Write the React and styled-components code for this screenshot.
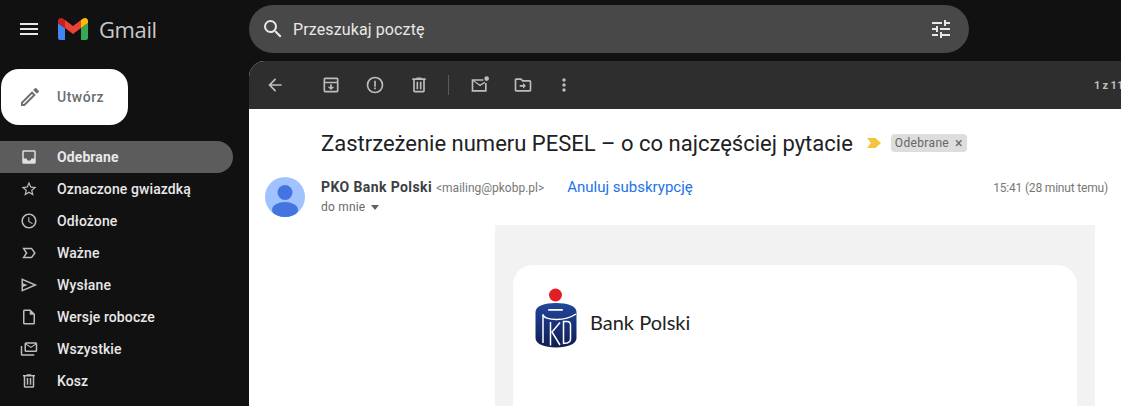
import styled, { createGlobalStyle } from 'styled-components';

const GlobalStyle = createGlobalStyle`
  html, body { margin: 0; height: 100%; overflow: hidden; background: #111111; }
  body { font-family: Roboto, "Liberation Sans", sans-serif; }
  #root { height: 100%; }
`

const Page = styled.div`
  display: grid;
  grid-template-columns: 249px 872px;
  height: 406px;
  overflow: hidden;
  background: #111111;
`
const Sidebar = styled.aside`
  display: flex;
  flex-direction: column;
`
const Brand = styled.div`
  display: flex;
  align-items: center;
  height: 58px;
  padding-left: 17px;
  color: #e8e8e8;
  svg { display: block; }
`
const BrandLogo = styled.svg`
  margin-left: 17px;
`
const BrandName = styled.span`
  margin-left: 11px;
  font-family: "Open Sans", sans-serif;
  font-size: 22px;
  color: #c9c9c9;
  letter-spacing: -0.4px;
`
const Compose = styled.button`
  display: flex;
  align-items: center;
  width: 127px;
  height: 56px;
  margin: 11px 0 16px 1px;
  padding: 0 0 0 17px;
  border: 0;
  border-radius: 18px;
  background: #ffffff;
  color: #6a6e72;
  font: 500 14px Roboto, sans-serif;
  letter-spacing: 0.5px;
  span { margin-left: 15px; }
`
const Nav = styled.nav`
  display: flex;
  flex-direction: column;
`
const NavItem = styled.div`
  display: flex;
  align-items: center;
  width: 233px;
  height: 32px;
  padding-left: 20px;
  box-sizing: border-box;
  border-radius: 0 16px 16px 0;
  background: ${p => (p.$active ? '#5c5c5c' : 'transparent')};
  color: #e8e8e8;
  font-size: 14px;
  font-weight: ${p => (p.$active ? 700 : 500)};
  letter-spacing: 0.1px;
  svg { color: ${p => (p.$active ? '#e0e0e0' : '#bdbdbd')}; flex: none; }
  span { margin-left: 19px; }
`
const Main = styled.main`
  display: flex;
  flex-direction: column;
  min-width: 0;
`
const SearchBar = styled.div`
  display: flex;
  align-items: center;
  width: 720px;
  height: 48px;
  margin: 5px 0 8px;
  padding: 0 16px 0 12px;
  box-sizing: border-box;
  border-radius: 24px;
  background: #484848;
  color: #e8e8e8;
  font-size: 16px;
  letter-spacing: 0.12px;
  span { margin-left: 8px; flex: 1; }
`
const Panel = styled.section`
  display: flex;
  flex-direction: column;
  flex: 1;
  background: #ffffff;
  border-radius: 16px 0 0 0;
  overflow: hidden;
`
const Toolbar = styled.div`
  display: flex;
  align-items: center;
  height: 48px;
  padding-left: 16px;
  background: #2e2e2e;
  color: #bdbdbd;
  white-space: nowrap;
  flex: none;
`
const ToolButton = styled.div`
  display: flex;
  margin-left: ${p => p.$gap}px;
  flex: none;
`
const Divider = styled.div`
  width: 1px;
  height: 20px;
  margin-left: 19px;
  background: #5a5a5a;
  flex: none;
`
const Pager = styled.span`
  margin-left: 520px;
  font-size: 11px;
  font-weight: 700;
  letter-spacing: 0.5px;
  word-spacing: -1.5px;
  color: #bdbdbd;
`
const SubjectRow = styled.div`
  display: flex;
  align-items: center;
  height: 28px;
  margin: 20px 0 0 72px;
`
const Subject = styled.h2`
  margin: 0;
  font-weight: 400;
  font-size: 22px;
  color: #202124;
  white-space: nowrap;
`
const Chevron = styled.svg`
  margin-left: 14px;
  flex: none;
`
const Chip = styled.span`
  display: flex;
  align-items: center;
  height: 18px;
  margin-left: 10px;
  padding: 0 4px;
  border-radius: 4px;
  background: #dddddd;
  color: #666666;
  font-size: 12px;
  letter-spacing: 0.35px;
  b { font-weight: 400; font-size: 14px; margin-left: 6px; }
`
const Sender = styled.div`
  display: flex;
  margin: 20px 13px 0 16px;
`
const Avatar = styled.div`
  flex: none;
  width: 40px;
  height: 40px;
  margin-right: 16px;
  border-radius: 50%;
  overflow: hidden;
  background: #a0c3ff;
`
const SenderInfo = styled.div`
  flex: 1;
`
const SenderLine = styled.div`
  display: flex;
  align-items: baseline;
  height: 20px;
  padding-top: 1px;
  font-size: 12px;
  color: #5f6368;
`
const SenderName = styled.span`
  font-size: 14px;
  font-weight: 700;
  letter-spacing: 0.4px;
  color: #3c4043;
`
const SenderMail = styled.span`
  margin-left: 4px;
  font-size: 12px;
  color: #777777;
`
const Unsubscribe = styled.a`
  margin-left: 23px;
  font-size: 15px;
  color: #1a73e8;
`
const Time = styled.span`
  margin-left: auto;
  font-size: 12px;
  letter-spacing: -0.18px;
  color: #777777;
`
const ToMe = styled.div`
  display: flex;
  align-items: center;
  height: 20px;
  margin-top: -1px;
  font-size: 12px;
  letter-spacing: 0.2px;
  color: #666a6e;
  i {
    margin-left: 6px;
    border: 4.5px solid transparent;
    border-top: 5px solid #5f6368;
    border-bottom: 0;
  }
`
const MailBody = styled.div`
  flex: 1;
  width: 564px;
  margin: 8px 0 0 246px;
  padding: 40px 18px 0;
  background: #f2f2f2;
`
const MailCard = styled.div`
  height: 200px;
  padding: 23px 0 0 22px;
  border-radius: 20px 20px 0 0;
  background: #ffffff;
`
const BankLogo = styled.div`
  display: flex;
  align-items: center;
  gap: 13px;
`
const BankName = styled.span`
  margin-top: 6px;
  font-family: Lato, sans-serif;
  font-size: 20px;
  color: #222222;
`

const Icon = ({ d, size = 20 }) => (
  <svg width={size} height={size} viewBox="0 0 24 24" fill="currentColor" fillRule="evenodd">
    <path d={d} />
  </svg>
)

const icons = {
  menu: 'M3 18h18v-2H3v2zm0-5h18v-2H3v2zm0-7v2h18V6H3z',
  search: 'M15.5 14h-.79l-.28-.27A6.471 6.471 0 0 0 16 9.5 6.5 6.5 0 1 0 9.5 16c1.61 0 3.09-.59 4.23-1.57l.27.28v.79l5 4.99L20.49 19l-4.99-5zm-6 0C7.01 14 5 11.99 5 9.5S7.01 5 9.5 5 14 7.01 14 9.5 11.99 14 9.5 14z',
  tune: 'M3 17v2h6v-2H3zM3 5v2h10V5H3zm10 16v-2h8v-2h-8v-2h-2v6h2zM7 9v2H3v2h4v2h2V9H7zm14 4v-2H11v2h10zm-6-4h2V7h4V5h-4V3h-2v6z',
  back: 'M20 11H7.83l5.59-5.59L12 4l-8 8 8 8 1.41-1.41L7.83 13H20v-2z',
  pencil: 'M3 17.25V21h3.75L17.81 9.94l-3.75-3.75L3 17.25zM5.92 19H5v-.92l9.06-9.06.92.92L5.92 19zM20.71 5.63l-2.34-2.34a1 1 0 0 0-1.41 0l-1.83 1.83 3.75 3.75 1.83-1.83a1 1 0 0 0 0-1.41z',
  inbox: 'M19 3H5c-1.1 0-2 .9-2 2v14c0 1.1.9 2 2 2h14c1.1 0 2-.9 2-2V5c0-1.1-.9-2-2-2zm0 11h-4c0 1.66-1.35 3-3 3s-3-1.34-3-3H5V5h14z',
  star: 'M22 9.24l-7.19-.62L12 2 9.19 8.63 2 9.24l5.46 4.73L5.82 21 12 17.27 18.18 21l-1.63-7.03L22 9.24zM12 15.4l-3.76 2.27 1-4.28-3.32-2.88 4.38-.38L12 6.1l1.71 4.04 4.38.38-3.32 2.88 1 4.28L12 15.4z',
  clock: 'M11.99 2C6.47 2 2 6.48 2 12s4.47 10 9.99 10C17.52 22 22 17.52 22 12S17.52 2 11.99 2zM12 20c-4.42 0-8-3.58-8-8s3.58-8 8-8 8 3.58 8 8-3.58 8-8 8zm.5-13H11v6l5.25 3.15.75-1.23-4.5-2.67z',
  important: 'M15 19H3l4.5-7L3 5h12c.65 0 1.26.31 1.63.84L21 12l-4.37 6.16c-.37.52-.98.84-1.63.84zm-8.500-2H15l3.5-5L15 7H6.500l3.5 5-3.5 5z',
  send: 'M2 3l21 9-21 9zM4 6.100V9.500l6 2.500-6 2.500v3.400L18 12z',
  draft: 'M14 2H6c-1.100 0-1.990.9-1.990 2L4 20c0 1.100.89 2 1.990 2H18c1.100 0 2-.9 2-2V8l-6-6zM6 20V4h7v5h5v11H6z',
  allMail: 'M8 3h13a2 2 0 0 1 2 2v9a2 2 0 0 1-2 2H8a2 2 0 0 1-2-2V5a2 2 0 0 1 2-2zm.4 2l6.100 4 6.100-4zM8 6.200V14h13V6.200l-6.500 4.300zM1 8h2v11h16v2H3a2 2 0 0 1-2-2z',
  trash: 'M15 4V3H9v1H4v2h1v13c0 1.100.9 2 2 2h10c1.100 0 2-.9 2-2V6h1V4h-5zm2 15H7V6h10v13zM9 8h2v9H9zm4 0h2v9h-2z',
  archive: 'M19 3H5a2 2 0 0 0-2 2v14a2 2 0 0 0 2 2h14a2 2 0 0 0 2-2V5a2 2 0 0 0-2-2zM5 5h14v3H5V5zm0 14V10h14v9H5zM13 11h-2v3H8l4 4 4-4h-3z',
  report: 'M12 2a10 10 0 1 0 0 20 10 10 0 0 0 0-20zm0 18a8 8 0 1 1 0-16 8 8 0 0 1 0 16zm-1-13h2v7h-2zm0 8h2v2h-2z',
  unread: 'M20 1.500a2.800 2.800 0 1 1 0 5.600 2.800 2.800 0 0 1 0-5.600zM2 5h14v2H5l7 4.500 6-3.800V9.500h2V20H2zm2 2.500V18h14v-8.300l-6 3.900z',
  move: 'M20 6h-8l-2-2H4c-1.100 0-2 .9-2 2v12c0 1.100.9 2 2 2h16c1.100 0 2-.9 2-2V8c0-1.100-.9-2-2-2zm0 12H4V6h5.170l2 2H20v10zm-8-4H8v-2h4V9.500l3.500 3.500-3.500 3.500V14z',
  more: 'M12 8c1.100 0 2-.9 2-2s-.9-2-2-2-2 .9-2 2 .9 2 2 2zm0 2c-1.100 0-2 .9-2 2s.9 2 2 2 2-.9 2-2-.9-2-2-2zm0 6c-1.100 0-2 .9-2 2s.9 2 2 2 2-.9 2-2-.9-2-2-2z',
}

const navItems = [
  { label: 'Odebrane', icon: 'inbox', active: true },
  { label: 'Oznaczone gwiazdką', icon: 'star' },
  { label: 'Odłożone', icon: 'clock' },
  { label: 'Ważne', icon: 'important' },
  { label: 'Wysłane', icon: 'send' },
  { label: 'Wersje robocze', icon: 'draft' },
  { label: 'Wszystkie', icon: 'allMail' },
  { label: 'Kosz', icon: 'trash' },
]

const tools = [
  { icon: 'archive', gap: 36 },
  { icon: 'report', gap: 24 },
  { icon: 'trash', gap: 24 },
]
const tools2 = [
  { icon: 'unread', gap: 21 },
  { icon: 'move', gap: 23 },
  { icon: 'more', gap: 21 },
]

function GmailLogo() {
  return (
    <BrandLogo width="30" height="22" viewBox="0 0 30 22">
      <path fill="#4285f4" d="M2 22h5V10L0 5v15c0 1.100.9 2 2 2" />
      <path fill="#34a853" d="M23 22h5c1.100 0 2-.9 2-2V5l-7 5" />
      <path fill="#fbbc04" d="M23 2v8l7-5V3c0-2.500-2.800-3.900-4.800-2.400" />
      <path fill="#ea4335" d="M7 10V2l8 6 8-6v8l-8 6" />
      <path fill="#c5221f" d="M0 3v2l7 5V2L4.800.6C2.800-.9 0 .5 0 3" />
    </BrandLogo>
  )
}

function PkoMark() {
  return (
    <svg width="42" height="62" viewBox="0 0 42 62">
      <defs>
        <linearGradient id="pko" x1="0" y1="0" x2="0" y2="1">
          <stop offset="0" stopColor="#22479b" />
          <stop offset="1" stopColor="#0f1d52" />
        </linearGradient>
      </defs>
      <circle cx="20.500" cy="7" r="6.500" fill="#e31e24" />
      <path fill="url(#pko)" d="M0.500 24c0-6 9-9 20.500-9s20.500 3 20.500 9v26c0 6-9 9.500-20.500 9.500S0.500 56 0.500 50z" />
      <rect x="13" y="21" width="15" height="1.800" rx="0.900" fill="#ffffff" />
      <g fill="none" stroke="#ffffff" strokeWidth="1.500">
        <path d="M8 26.500c0 3 6 5 13.500 5s13.500-1.500 19.500-5.500" />
        <path d="M8 26.500V55" />
        <path d="M15.500 34v23.500" />
        <path d="M25 34.500l-8 9.500 8 13" />
        <path d="M28.500 33.500h3.500c2 0 3.500 1.500 3.500 3.500v14c0 2-1.500 3.500-3.500 4l-3.500.5z" />
      </g>
    </svg>
  )
}

export default function App() {
  return (
    <>
      <GlobalStyle />
      <Page>
        <Sidebar>
          <Brand>
            <Icon d={icons.menu} size={24} />
            <GmailLogo />
            <BrandName>Gmail</BrandName>
          </Brand>
          <Compose>
            <Icon d={icons.pencil} size={24} />
            <span>Utwórz</span>
          </Compose>
          <Nav>
            {navItems.map(item => (
              <NavItem key={item.label} $active={item.active}>
                <Icon d={icons[item.icon]} size={18} />
                <span>{item.label}</span>
              </NavItem>
            ))}
          </Nav>
        </Sidebar>
        <Main>
          <SearchBar>
            <Icon d={icons.search} size={24} />
            <span>Przeszukaj pocztę</span>
            <Icon d={icons.tune} size={24} />
          </SearchBar>
          <Panel>
            <Toolbar>
              <ToolButton $gap={0}><Icon d={icons.back} /></ToolButton>
              {tools.map(t => (
                <ToolButton key={t.icon} $gap={t.gap}><Icon d={icons[t.icon]} /></ToolButton>
              ))}
              <Divider />
              {tools2.map(t => (
                <ToolButton key={t.icon} $gap={t.gap}><Icon d={icons[t.icon]} /></ToolButton>
              ))}
              <Pager>1 z 11</Pager>
            </Toolbar>
            <SubjectRow>
              <Subject>Zastrzeżenie numeru PESEL – o co najczęściej pytacie</Subject>
              <Chevron width="14" height="10" viewBox="0 0 14 10">
                <path fill="#f6c33e" d="M0 0h8.500L14 5l-5.500 5H0l4-5z" />
              </Chevron>
              <Chip>Odebrane<b>×</b></Chip>
            </SubjectRow>
            <Sender>
              <Avatar>
                <svg width="40" height="40" viewBox="0 0 40 40">
                  <circle cx="20" cy="15.500" r="7.500" fill="#4374e0" />
                  <ellipse cx="20" cy="33" rx="13" ry="8" fill="#4374e0" />
                </svg>
              </Avatar>
              <SenderInfo>
                <SenderLine>
                  <SenderName>PKO Bank Polski</SenderName>
                  <SenderMail>&lt;mailing@pkobp.pl&gt;</SenderMail>
                  <Unsubscribe>Anuluj subskrypcję</Unsubscribe>
                  <Time>15:41 (28 minut temu)</Time>
                </SenderLine>
                <ToMe>do mnie<i /></ToMe>
              </SenderInfo>
            </Sender>
            <MailBody>
              <MailCard>
                <BankLogo>
                  <PkoMark />
                  <BankName>Bank Polski</BankName>
                </BankLogo>
              </MailCard>
            </MailBody>
          </Panel>
        </Main>
      </Page>
    </>
  )
}
